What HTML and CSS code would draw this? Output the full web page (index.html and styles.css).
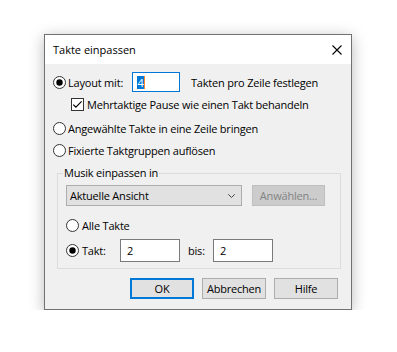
FILE: index.html
```html
<!DOCTYPE html>
<html lang="de">
<head>
<meta charset="utf-8">
<title>Takte einpassen</title>
<link rel="stylesheet" href="styles.css">
</head>
<body>
<div class="stage">
  <div class="dialog">
    <div class="titlebar">
      <span class="title">Takte einpassen</span>
      <svg class="close" width="10" height="10" viewBox="0 0 10 10"><path d="M0.5 0.5 L9.5 9.5 M9.5 0.5 L0.5 9.5" stroke="#000" stroke-width="1.1" fill="none"/></svg>
    </div>
    <div class="content">
      <div class="row">
        <svg class="radio" width="13" height="13" viewBox="0 0 13 13"><circle cx="6.5" cy="6.5" r="6" fill="#fff" stroke="#333"/><circle cx="6.5" cy="6.5" r="3.2" fill="#000"/></svg>
        <span class="lbl-layout">Layout mit:</span>
        <span class="edit focus"><span class="sel">4</span><span class="caret"></span></span>
        <span class="after-edit">Takten pro Zeile festlegen</span>
      </div>
      <div class="row row-check">
        <svg class="check" width="13" height="13" viewBox="0 0 13 13"><rect x="0.5" y="0.5" width="12" height="12" fill="#fff" stroke="#333"/><polyline points="2.3,6.6 4.9,9.2 10.6,3.4" fill="none" stroke="#000" stroke-width="1.2"/></svg>
        <span>Mehrtaktige Pause wie einen Takt behandeln</span>
      </div>
      <div class="row row-3">
        <svg class="radio" width="13" height="13" viewBox="0 0 13 13"><circle cx="6.5" cy="6.5" r="6" fill="#fff" stroke="#333"/></svg>
        <span>Angewählte Takte in eine Zeile bringen</span>
      </div>
      <div class="row row-4">
        <svg class="radio" width="13" height="13" viewBox="0 0 13 13"><circle cx="6.5" cy="6.5" r="6" fill="#fff" stroke="#333"/></svg>
        <span>Fixierte Taktgruppen auflösen</span>
      </div>
      <fieldset class="group">
        <legend>Musik einpassen in</legend>
        <div class="group-body">
          <div class="row row-combo">
            <div class="combo"><span>Aktuelle Ansicht</span><svg width="7" height="4" viewBox="0 0 7 4"><polyline points="0.3,0.3 3.5,3.5 6.7,0.3" fill="none" stroke="#444" stroke-width="1"/></svg></div>
            <div class="btn-dis">Anwählen...</div>
          </div>
          <div class="row row-alle">
            <svg class="radio r-g" width="13" height="13" viewBox="0 0 13 13"><circle cx="6.5" cy="6.5" r="6" fill="#fff" stroke="#333"/></svg>
            <span>Alle Takte</span>
          </div>
          <div class="row row-takt">
            <svg class="radio r-g" width="13" height="13" viewBox="0 0 13 13"><circle cx="6.5" cy="6.5" r="6" fill="#fff" stroke="#333"/><circle cx="6.5" cy="6.5" r="3.2" fill="#000"/></svg>
            <span class="lbl-takt">Takt:</span>
            <span class="edit num">2</span>
            <span class="lbl-bis">bis:</span>
            <span class="edit num">2</span>
          </div>
        </div>
      </fieldset>
      <div class="buttons">
        <div class="btn default">OK</div>
        <div class="btn">Abbrechen</div>
        <div class="btn">Hilfe</div>
      </div>
    </div>
  </div>
</div>
</body>
</html>
```

FILE: styles.css
```css
* { box-sizing: border-box; }
html, body { margin: 0; padding: 0; background: #fff; }
body {
  font-family: "Open Sans", "Noto Sans", sans-serif;
  font-size: 11px;
  letter-spacing: -0.2px;
  color: #000;
}
.stage { padding: 34px 0 0 44px; }
.dialog {
  width: 308px;
  height: 276px;
  border: 1px solid #717171;
  background: #f0f0f0;
  box-shadow: 0 3px 14px rgba(0, 0, 0, 0.28);
  display: flex;
  flex-direction: column;
}
.titlebar {
  height: 29px;
  background: #fff;
  display: flex;
  align-items: center;
  justify-content: space-between;
  padding: 0 9px 0 8px;
  flex: none;
}
.title { font-size: 11px; letter-spacing: 0; }
.close { display: block; }
.content {
  padding: 8px 0 0 8px;
  display: flex;
  flex-direction: column;
}
.row {
  display: flex;
  align-items: center;
  height: 20px;
  white-space: nowrap;
}
.radio { flex: none; margin-right: 2px; display: block; }
.radio.r-g { margin-right: 3px; }
.lbl-layout { width: 64px; }
.edit {
  background: #fff;
  border: 1px solid #7a7a7a;
  display: flex;
  align-items: center;
  flex: none;
}
.edit.focus {
  width: 48px;
  height: 20px;
  border-color: #0078d7;
  padding-left: 4px;
}
.sel {
  background: #0078d7;
  color: #fff;
  height: 13px;
  line-height: 13px;
  padding: 0 0 0 0.5px;
}
.caret { width: 1px; height: 13px; background: #ff8728; }
.after-edit { margin-left: 11px; }
.row-check { margin-top: 2px; padding-left: 18px; }
.check { flex: none; margin-right: 3px; display: block; }
.row-3 { margin-top: 4px; }
.row-4 { margin-top: 2px; }
.group {
  margin: 5px 0 0 4px;
  width: 284px;
  padding: 0 0 6px 0;
  border: 1px solid #dcdcdc;
  min-width: 0;
}
.group legend {
  margin-left: 5px;
  padding: 0 1px;
  line-height: 16px;
  height: 16px;
}
.group-body { padding: 4px 0 0 8px; }
.row-combo { height: 21px; }
.combo {
  width: 176px;
  height: 21px;
  border: 1px solid #adadad;
  background: #e1e1e1;
  display: flex;
  align-items: center;
  justify-content: space-between;
  padding: 0 6px 0 3px;
}
.combo svg { display: block; }
.btn-dis {
  margin-left: 10px;
  width: 73px;
  height: 21px;
  border: 1px solid #bfbfbf;
  background: #cccccc;
  color: #838383;
  display: flex;
  align-items: center;
  justify-content: center;
}
.row-alle { margin-top: 9px; }
.row-takt { margin-top: 4px; height: 23px; }
.lbl-takt { width: 38px; }
.lbl-bis { width: 25px; margin-left: 8px; }
.edit.num { width: 60px; height: 23px; padding-left: 6px; }
.buttons {
  display: flex;
  gap: 8px;
  margin-top: 9px;
  padding-left: 77px;
}
.btn {
  width: 64px;
  height: 21px;
  border: 1px solid #adadad;
  background: #e1e1e1;
  display: flex;
  align-items: center;
  justify-content: center;
}
.btn.default { border: 2px solid #0078d7; }
```
